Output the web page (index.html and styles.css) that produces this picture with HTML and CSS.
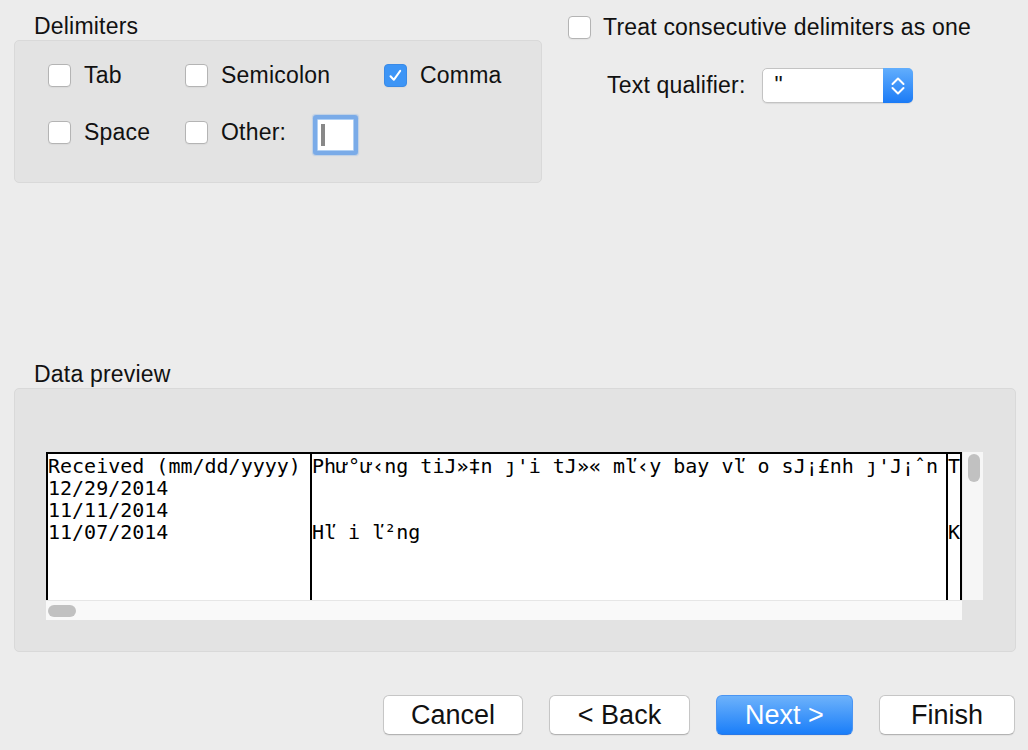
FILE: index.html
```html
<!DOCTYPE html>
<html>
<head>
<meta charset="utf-8">
<title>Text Import Wizard</title>
<link rel="stylesheet" href="styles.css">
</head>
<body>
<div class="page">
  <div class="top">
    <div class="delim-col">
      <div class="group-label">Delimiters</div>
      <div class="group delim-box">
        <div class="row">
          <div class="opt"><span class="cb"></span><span class="lbl">Tab</span></div>
          <div class="opt"><span class="cb"></span><span class="lbl">Semicolon</span></div>
          <div class="opt"><span class="cb checked"><svg width="23" height="23" viewBox="0 0 23 23"><path d="M6.5 12.2 L9.8 15.8 L16.2 6.8" fill="none" stroke="#fff" stroke-width="2" stroke-linecap="round" stroke-linejoin="round"/></svg></span><span class="lbl">Comma</span></div>
        </div>
        <div class="row row2">
          <div class="opt"><span class="cb"></span><span class="lbl">Space</span></div>
          <div class="opt"><span class="cb"></span><span class="lbl">Other:</span><span class="other-input"><span class="caret"></span></span></div>
        </div>
      </div>
    </div>
    <div class="opts-col">
      <div class="opt consec"><span class="cb"></span><span class="lbl">Treat consecutive delimiters as one</span></div>
      <div class="qual">
        <span class="lbl">Text qualifier:</span>
        <div class="select">
          <span class="sel-val">"</span>
          <span class="sel-arrow"><svg width="30" height="35" viewBox="0 0 30 35"><path d="M9.5 16 L15 10.5 L20.5 16 M9.5 20 L15 25.5 L20.5 20" fill="none" stroke="#fff" stroke-width="2" stroke-linecap="round" stroke-linejoin="round"/></svg></span>
        </div>
      </div>
    </div>
  </div>

  <div class="group-label data-label">Data preview</div>
  <div class="group data-box">
    <div class="preview">
      <div class="table">
        <div class="col col1">Received (mm/dd/yyyy)
12/29/2014
11/11/2014
11/07/2014</div>
        <div class="col col2">Phư°ư‹ng tiJ»‡n ȷ'i tJ»« mľ‹y bay vľ o sJ¡£nh ȷ'J¡ˆn


Hľ i ľ²ng</div>
        <div class="col col3">T


K</div>
      </div>
      <div class="vscroll"><div class="vthumb"></div></div>
      <div class="hscroll"><div class="hthumb"></div></div>
    </div>
  </div>

  <div class="buttons">
    <div class="btn btn-cancel">Cancel</div>
    <div class="btn btn-back">&lt; Back</div>
    <div class="btn btn-next">Next &gt;</div>
    <div class="btn btn-finish">Finish</div>
  </div>
</div>
</body>
</html>
```

FILE: styles.css
```css
html, body {
  margin: 0;
  padding: 0;
  background: #ececec;
}

body {
  width: 1028px;
  height: 750px;
  overflow: hidden;
  font-family: "Liberation Sans", Arial, sans-serif;
  font-size: 23px;
  letter-spacing: 0.2px;
  color: #111;
}

.page {
  padding-top: 14px;
}

.top {
  display: flex;
  align-items: flex-start;
  padding-left: 14px;
}

.group-label {
  line-height: 24px;
  height: 24px;
  padding-left: 20px;
}

.group {
  box-sizing: border-box;
  background: #e3e3e3;
  border: 1px solid #d9d9d9;
  border-radius: 5px;
  margin-top: 2px;
}

.delim-box {
  width: 528px;
  height: 143px;
  padding: 23px 0 0 33px;
}

.row {
  display: grid;
  grid-template-columns: 137px 199px auto;
  grid-template-rows: 23px;
  height: 23px;
  align-items: center;
}

.row2 {
  margin-top: 34px;
}

.opt {
  display: flex;
  align-items: center;
  gap: 13px;
  line-height: 23px;
  white-space: nowrap;
}

.cb {
  flex: none;
  display: block;
  box-sizing: border-box;
  width: 23px;
  height: 23px;
  background: #fff;
  border: 1px solid #b4b4b4;
  border-radius: 4px;
  box-shadow: 0 1px 1px rgba(0, 0, 0, 0.04);
}

.cb.checked {
  background: #3d95f6;
  border-color: #3a8ae6;
}

.cb svg {
  display: block;
  margin: -1px;
}

.other-input {
  box-sizing: border-box;
  display: flex;
  align-self: center;
  width: 37px;
  height: 32px;
  margin-top: 5px;
  margin-left: 18px;
  padding: 4px 0 0 3px;
  background: #fff;
  border: 1px solid #b0d0f4;
  border-radius: 1px;
  box-shadow: 0 0 0 4px #7aabe8, 0 0 1px 5px rgba(122, 171, 232, 0.35);
}

.caret {
  display: block;
  width: 4px;
  height: 22px;
  background: #888;
}

.opts-col {
  margin-left: 26px;
  padding-top: 1px;
}

.consec {
  gap: 12px;
  line-height: 24px;
}

.qual {
  display: flex;
  align-items: center;
  gap: 16px;
  margin-top: 29px;
  margin-left: 39px;
}

.select {
  box-sizing: border-box;
  display: flex;
  width: 151px;
  height: 35px;
  background: #fff;
  border: 1px solid #c3c3c3;
  border-radius: 5px;
  box-shadow: 0 1px 1px rgba(0, 0, 0, 0.08);
}

.sel-val {
  flex: 1;
  padding-left: 12px;
  line-height: 33px;
  font-size: 23px;
}

.sel-arrow {
  display: block;
  width: 30px;
  height: 35px;
  margin: -1px -1px -1px 0;
  border-radius: 0 5px 5px 0;
  background: linear-gradient(#62aefd, #1b7bf6);
}

.sel-arrow svg {
  display: block;
}

.data-label {
  margin-top: 179px;
  margin-left: 14px;
}

.data-box {
  width: 1002px;
  height: 264px;
  margin-left: 14px;
  padding: 63px 0 0 31px;
}

.preview {
  display: grid;
  grid-template-columns: 916px 21px;
  grid-template-rows: 148px 20px;
}

.table {
  box-sizing: border-box;
  display: flex;
  background: #fff;
  border: 2px solid #000;
  border-bottom: none;
  overflow: hidden;
}

.col {
  flex: none;
  white-space: pre;
  font-family: "DejaVu Sans Mono", "Liberation Mono", monospace;
  font-size: 20px;
  letter-spacing: 0;
  line-height: 22px;
  padding-top: 1px;
  color: #000;
  overflow: hidden;
}

.col1 {
  width: 262px;
  border-right: 2px solid #000;
}

.col2 {
  width: 634px;
  border-right: 2px solid #000;
}

.col3 {
  width: 12px;
}

.vscroll {
  box-sizing: border-box;
  background: #f6f6f6;
  border-left: 1px solid #ebebeb;
  padding: 2px 0 0 5px;
}

.vthumb {
  width: 12px;
  height: 28px;
  border-radius: 6px;
  background: #c1c1c1;
}

.hscroll {
  box-sizing: border-box;
  background: #f9f9f9;
  border-top: 1px solid #e6e6e6;
  padding: 4px 0 0 2px;
}

.hthumb {
  width: 28px;
  height: 12px;
  border-radius: 6px;
  background: #c1c1c1;
}

.buttons {
  display: flex;
  justify-content: flex-end;
  gap: 26px;
  margin-top: 43px;
  padding-right: 13px;
}

.btn {
  box-sizing: border-box;
  height: 40px;
  background: #fff;
  border: 1px solid #c6c6c6;
  border-bottom-color: #b3b3b3;
  border-radius: 6px;
  font-size: 27px;
  letter-spacing: 0;
  line-height: 38px;
  text-align: center;
  color: #111;
  box-shadow: 0 1px 1px rgba(0, 0, 0, 0.05);
}

.btn-cancel { width: 140px; }
.btn-back { width: 141px; }
.btn-next {
  width: 137px;
  color: #fff;
  background: linear-gradient(#6db2fb, #1a7ef9);
  border-color: #4a95f3;
  border-bottom-color: #2a78e6;
}
.btn-finish { width: 136px; }
```
